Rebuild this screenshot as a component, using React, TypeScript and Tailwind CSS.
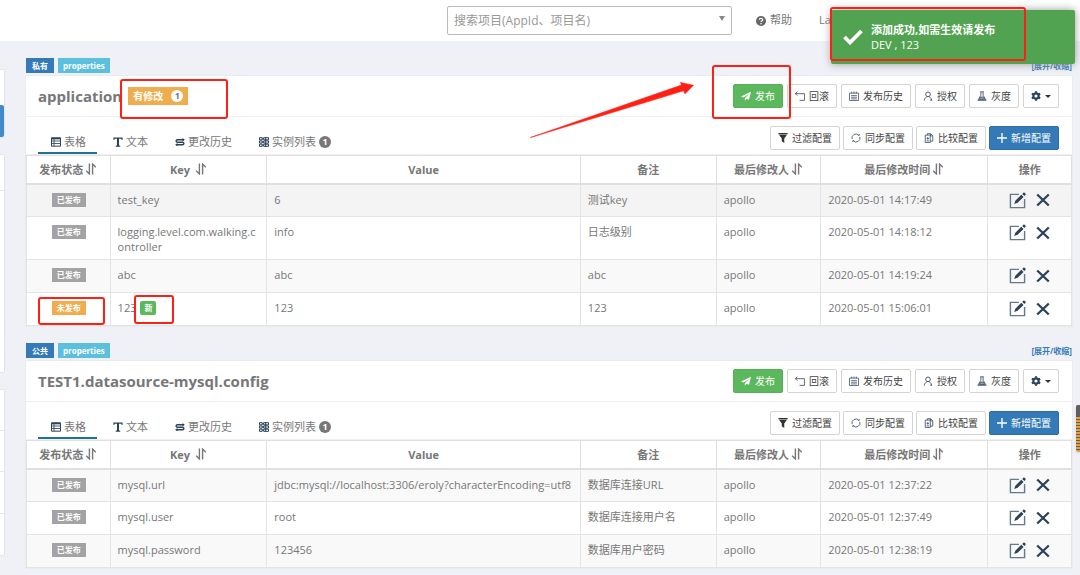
import type { ReactNode, SVGProps } from 'react';

interface ConfigItem {
  released: boolean;
  key: string;
  isNew?: boolean;
  value: string;
  comment: string;
  operator: string;
  time: string;
}

interface NamespaceData {
  name: string;
  scope: string;
  modified?: number;
  hoverFirst?: boolean;
  items: ConfigItem[];
}

const namespaces: NamespaceData[] = [
  {
    name: 'application',
    scope: '私有',
    modified: 1,
    hoverFirst: true,
    items: [
      { released: true, key: 'test_key', value: '6', comment: '测试key', operator: 'apollo', time: '2020-05-01 14:17:49' },
      { released: true, key: 'logging.level.com.walking.controller', value: 'info', comment: '日志级别', operator: 'apollo', time: '2020-05-01 14:18:12' },
      { released: true, key: 'abc', value: 'abc', comment: 'abc', operator: 'apollo', time: '2020-05-01 14:19:24' },
      { released: false, key: '123', isNew: true, value: '123', comment: '123', operator: 'apollo', time: '2020-05-01 15:06:01' },
    ],
  },
  {
    name: 'TEST1.datasource-mysql.config',
    scope: '公共',
    items: [
      { released: true, key: 'mysql.url', value: 'jdbc:mysql://localhost:3306/eroly?characterEncoding=utf8', comment: '数据库连接URL', operator: 'apollo', time: '2020-05-01 12:37:22' },
      { released: true, key: 'mysql.user', value: 'root', comment: '数据库连接用户名', operator: 'apollo', time: '2020-05-01 12:37:49' },
      { released: true, key: 'mysql.password', value: '123456', comment: '数据库用户密码', operator: 'apollo', time: '2020-05-01 12:38:19' },
    ],
  },
];

/* ---------- icons ---------- */

function Svg({ children, className = 'w-2.5 h-2.5', ...rest }: SVGProps<SVGSVGElement>) {
  return (
    <svg viewBox="0 0 12 12" fill="none" stroke="currentColor" className={`shrink-0 ${className}`} aria-hidden="true" {...rest}>
      {children}
    </svg>
  );
}

const PlaneIcon = () => (
  <Svg stroke="none" fill="currentColor">
    <path d="M12 1 0 6.6l3.2 1.2L9.6 3.6 4.6 8.6v3l2-2.2 3 1.2z" />
  </Svg>
);

const RollbackIcon = () => (
  <Svg strokeWidth="1.1">
    <path d="M.5 3.2h11v8H5.5M2.8.8.5 3.2l2.3 2.4" />
  </Svg>
);

const CalendarIcon = () => (
  <Svg strokeWidth="1">
    <path d="M.6 2.5h10.8v8.9H.6zM3.2.6v2.5M6 .6v2.5M8.8.6v2.5M2.5 5.5h7M2.5 7.5h7M2.5 9.5h7" />
  </Svg>
);

const UserIcon = () => (
  <Svg strokeWidth="1.2">
    <circle cx="6" cy="4" r="2.8" />
    <path d="M1.5 11.5c.3-2.500 1.500-3.600 3-4.400M10.500 11.500c-.3-2.500-1.500-3.600-3-4.400M8.500 11h2" />
  </Svg>
);

const FlaskIcon = () => (
  <Svg strokeWidth="1.1">
    <path d="M3.8 1h4.400M4.700 1v4L1 11.200h10L7.300 5V1" />
    <path d="M4.400 7.200 2.600 10.200h6.800L7.600 7.200z" fill="currentColor" fillOpacity="0.6" />
  </Svg>
);

const GearIcon = () => (
  <Svg className="w-2.5 h-2.5 text-[#2b425b]" strokeWidth="2.6">
    <circle cx="6" cy="6" r="3.2" />
    <path d="M6 .2v2M6 9.800v2M1 3.100l1.700 1M9.300 7.900l1.700 1M1 8.900l1.700-1M9.300 4.100l1.700-1" />
  </Svg>
);

const FilterIcon = () => (
  <Svg className="w-2.5 h-2.5 text-[#333]" stroke="none" fill="currentColor">
    <path d="M.5 0h11v1.500H.5zM1.200 2h9.600L7.500 6.500V12l-3-2V6.500z" />
  </Svg>
);

const SyncIcon = () => (
  <Svg strokeWidth="1.1">
    <path d="M1.300 7.300A4.900 4.900 0 0 1 9.500 2.600M10.700 4.700A4.900 4.900 0 0 1 2.500 9.400" />
    <path d="M10 1.200v1.800H8.200M2 10.800V9h1.800" strokeWidth="0.8" />
  </Svg>
);

const CompareIcon = () => (
  <Svg strokeWidth="1.1">
    <path d="M1.500 2.500h6v9h-6zM4 2.500V.8h4l2.500 2.500v6.500h-3M3 6.500h3M4.500 5v3M3 9.500h3M7.800 1v2.500h2.500" />
  </Svg>
);

const PlusIcon = () => (
  <Svg strokeWidth="1.6">
    <path d="M6 0v12M0 6h12" />
  </Svg>
);

const TableIcon = () => (
  <Svg strokeWidth="1.2">
    <path d="M.6 1h10.800v10H.6z" />
    <path d="M.6 1.800h10.800" strokeWidth="2" />
    <path d="M3.600 2v9M.6 4.800h10.800M.6 7.800h10.800" strokeWidth="1" />
  </Svg>
);

const TextIcon = () => (
  <Svg stroke="none" fill="currentColor">
    <path d="M.5.5h11v3.200h-1L10 2H7.200v8l1.600.8v.9H3.200v-.9L4.800 10V2H2l-.5 1.700h-1z" />
  </Svg>
);

const HistoryIcon = () => (
  <Svg strokeWidth="1.7">
    <path d="M10.500 3.300H3C.8 3.300.8 6.200 3 6.200h6c2.200 0 2.200 3 0 3H1.500" />
    <path d="M9 1.300v4l2.800-2zM3 7.200v4L.2 9.200z" fill="currentColor" stroke="none" />
  </Svg>
);

const InstanceIcon = () => (
  <Svg strokeWidth="1.2">
    <path d="M.6.8h3.200v2.600H.6zM.6 4.700h3.200v2.600H.6zM.6 8.600h3.200v2.600H.6zM5.600.8h5.800v2.600H5.600zM5.600 4.700h5.800v2.600H5.600zM5.600 8.600h5.800v2.600H5.600zM3.800 2.100h1.800M3.800 6h1.800M3.800 9.900h1.800M8 .8v10.400" />
  </Svg>
);

// each arrow carries its barb on the outer side only
const SortIcon = () => (
  <Svg className="w-3 h-3" strokeWidth="1.4">
    <path d="M4.400.5v10.400L1.200 7.700M7.600 11.500V1.100l3.200 3.200" />
  </Svg>
);

const EditIcon = () => (
  <svg viewBox="0 0 18 18" className="h-[17px] w-[17px]" fill="none" aria-hidden="true">
    <path d="M10.500 2.500H1.500v14h15V7.500" stroke="#66788c" strokeWidth="1.5" />
    <path d="m5.500 12.800 1.200-3.600L13 3l2.400 2.300-6.300 6.200zM14 2l1.300-1.200c.9-.8 3 1.200 2.200 2.200L16.300 4.300z" fill="#2b425b" />
  </svg>
);

const DeleteIcon = () => (
  <svg viewBox="0 0 14 14" className="h-3.5 w-3.5" fill="none" aria-hidden="true">
    <path d="m1.200 1.500 11.600 11M12.800 1.500l-11.600 11" stroke="#2b425b" strokeWidth="2.3" />
  </svg>
);

/* ---------- small pieces ---------- */

function ToolButton({ icon, children, variant = 'default', label }: {
  icon: ReactNode;
  children?: ReactNode;
  variant?: 'default' | 'success' | 'primary';
  label?: string;
}) {
  const styles = {
    default: 'bg-white border-[#d4d4d4] text-[#444]',
    success: 'bg-[#5cb85c] border-[#56b156] text-white',
    primary: 'bg-[#337ab7] border-[#2e6da4] text-white',
  };
  return (
    <button
      type="button"
      aria-label={label}
      className={`flex h-6 items-center gap-1 rounded-xs border px-[7px] text-[10px] whitespace-nowrap ${styles[variant]}`}
    >
      <span className={variant === 'default' ? 'text-[#4a5d73]' : ''}>{icon}</span>
      {children}
    </button>
  );
}

function Tab({ icon, children, active }: { icon: ReactNode; children: ReactNode; active?: boolean }) {
  return (
    <button
      type="button"
      role="tab"
      aria-selected={!!active}
      className={`flex h-[22px] items-center gap-[3px] border-b-2 pr-[11px] pl-[13px] text-[11px] ${active ? 'border-[#1f7391]' : 'border-transparent'}`}
    >
      <span className="text-[#2b425b]">{icon}</span>
      {children}
    </button>
  );
}

function StatusLabel({ released }: { released: boolean }) {
  return (
    <span className={`mt-px inline-block h-3.5 px-[5px] align-top text-[8px] leading-[14px] font-bold text-white ${released ? 'bg-[#a3a3a3]' : 'bg-[#f0ad4e]'}`}>
      {released ? '已发布' : '未发布'}
    </span>
  );
}

function Th({ children, width, sortable }: { children: ReactNode; width: string; sortable?: boolean }) {
  return (
    <th className={`${width} h-7 border border-b-2 border-[#e0e0e0] p-0 font-bold`}>
      <span className="flex items-center justify-center gap-0.5">
        {children}
        {sortable && <SortIcon />}
      </span>
    </th>
  );
}

const cell = 'border border-[#e4e4e4] pt-[7px] pr-1.5 pb-[5px] pl-[7px] break-all';

function ItemTable({ items, hoverFirst }: { items: ConfigItem[]; hoverFirst?: boolean }) {
  return (
    <table className="w-full table-fixed border-collapse text-left text-[11px] leading-[15px]">
      <thead>
        <tr>
          <Th width="w-[8%]" sortable>发布状态</Th>
          <Th width="w-[15%]" sortable>Key&nbsp;</Th>
          <Th width="w-[30%]">Value</Th>
          <Th width="w-[13%]">备注</Th>
          <Th width="w-[10%]" sortable>最后修改人</Th>
          <Th width="w-[16%]" sortable>最后修改时间</Th>
          <Th width="w-[8%]">操作</Th>
        </tr>
      </thead>
      <tbody>
        {items.map((item, i) => (
          <tr
            key={item.key}
            className={`h-[33px] align-top ${i === 0 && hoverFirst ? 'bg-[#f4f4f4]' : i % 2 === 0 ? 'bg-[#f9f9f9]' : 'bg-white'}`}
          >
            <td className={`${cell} text-center`}><StatusLabel released={item.released} /></td>
            <td className={cell}>
              {item.key}
              {item.isNew && (
                <span className="mt-px ml-1 inline-block h-3.5 rounded-xs bg-[#5cb85c] px-1 align-top text-[8px] leading-[14px] font-bold text-white">新</span>
              )}
            </td>
            <td className={cell}>{item.value}</td>
            <td className={cell}>{item.comment}</td>
            <td className={cell}>{item.operator}</td>
            <td className={cell}>{item.time}</td>
            <td className="border border-[#e4e4e4] p-0 pt-[7px]">
              <div className="flex items-center justify-center gap-2.5">
                <button type="button" aria-label="修改"><EditIcon /></button>
                <button type="button" aria-label="删除"><DeleteIcon /></button>
              </div>
            </td>
          </tr>
        ))}
      </tbody>
    </table>
  );
}

function Namespace({ data }: { data: NamespaceData }) {
  return (
    <section>
      <div className="flex h-[18px] items-start justify-between text-[8px] leading-[15px] font-bold">
        <div className="flex gap-1 text-white">
          <span className="bg-[#337ab7] px-1.5">{data.scope}</span>
          <span className="bg-[#5bc0de] px-[5px]">properties</span>
        </div>
        <a href="#toggle" className="text-[#337ab7]">[展开/收缩]</a>
      </div>

      <div className="bg-white shadow-[0_0_1px_#ccc]">
        <header className="flex h-[41px] items-center justify-between border-b border-[#f0f0f0] pr-[13px] pl-3">
          <h2 className="flex items-center gap-1.5 text-[15px] font-bold text-[#777]">
            {data.name}
            {data.modified && (
              <span className="flex h-[18px] items-center gap-2 bg-[#f0ad4e] px-[5px] text-[10px] text-white">
                有修改
                <span className="h-3 w-3 rounded-full bg-white text-center text-[9px] leading-3 text-[#777]">{data.modified}</span>
              </span>
            )}
          </h2>
          <div className="flex gap-1">
            <ToolButton variant="success" icon={<PlaneIcon />}>发布</ToolButton>
            <ToolButton icon={<RollbackIcon />}>回滚</ToolButton>
            <ToolButton icon={<CalendarIcon />}>发布历史</ToolButton>
            <ToolButton icon={<UserIcon />}>授权</ToolButton>
            <ToolButton icon={<FlaskIcon />}>灰度</ToolButton>
            <ToolButton icon={<GearIcon />} label="更多操作">
              <span className="border-x-[3px] border-t-[3px] border-x-transparent border-t-[#333]" />
            </ToolButton>
          </div>
        </header>

        <div className="flex h-[38px] items-end justify-between border-b border-[#f0f0f0] pr-[13px] pl-3">
          <div role="tablist" className="flex gap-[3px]">
            <Tab active icon={<TableIcon />}>表格</Tab>
            <Tab icon={<TextIcon />}>文本</Tab>
            <Tab icon={<HistoryIcon />}>更改历史</Tab>
            <Tab icon={<InstanceIcon />}>
              实例列表
              <span className="h-3 w-3 rounded-full bg-[#777] text-center text-[9px] leading-3 font-bold text-white">1</span>
            </Tab>
          </div>
          <div className="flex gap-[3px] pb-1">
            <ToolButton icon={<FilterIcon />}>过滤配置</ToolButton>
            <ToolButton icon={<SyncIcon />}>同步配置</ToolButton>
            <ToolButton icon={<CompareIcon />}>比较配置</ToolButton>
            <ToolButton variant="primary" icon={<PlusIcon />}>新增配置</ToolButton>
          </div>
        </div>

        <ItemTable items={data.items} hoverFirst={data.hoverFirst} />
      </div>
    </section>
  );
}

function Marker({ className }: { className: string }) {
  return <div className={`pointer-events-none absolute rounded-[3px] border-2 border-[#ff2015] ${className}`} />;
}

export default function App() {
  return (
    <div className="relative min-h-screen overflow-hidden bg-[#f0f1f7] font-['Open_Sans','Noto_Sans_CJK_SC',sans-serif] text-[11px] text-[#777]">
      <nav className="flex h-[41px] items-center bg-white pl-[447px]">
        <div className="flex h-[29px] w-[285px] items-center rounded-xs border border-[#bbb]">
          <input
            aria-label="搜索项目"
            placeholder="搜索项目(AppId、项目名)"
            className="min-w-0 flex-1 px-1.5 text-xs outline-none placeholder:text-[#999]"
          />
          <span className="mr-1.5 mb-1 border-x-[3px] border-t-[5px] border-x-transparent border-t-[#888]" />
        </div>
        <a href="#help" className="ml-6 flex items-center gap-1">
          <svg viewBox="0 0 12 12" className="h-2.5 w-2.5" aria-hidden="true">
            <circle cx="6" cy="6" r="6" fill="#666" />
            <path d="M4 4.600C4 2.200 8 2.200 8 4.500 8 6 6 5.800 6 7.300M6 8.300v1.500" stroke="#fff" strokeWidth="1.5" fill="none" />
          </svg>
          帮助
        </a>
        <a href="#language" className="ml-[27px]">Language</a>
      </nav>

      <div className="flex items-start pr-2">
        <aside className="w-[5px] shrink-0 pt-7">
          <div className="flex h-[69px] items-end rounded-r-xs border border-l-0 border-[#e2e3e8] bg-white">
            <span className="h-8 w-1 rounded-r-xs bg-[#428bca]" />
          </div>
          <div className="mt-4 h-[219px] rounded-r-xs border border-l-0 border-[#e2e3e8] bg-white">
            <div className="h-9 border-b border-[#e8e8ec]" />
          </div>
          <div className="mt-4 rounded-r-xs border border-l-0 border-[#e2e3e8] bg-white">
            <div className="h-[41px] border-b border-[#e8e8ec]" />
            <div className="h-[41px] border-b border-[#e8e8ec]" />
            <div className="h-[42px] border-b border-[#e8e8ec]" />
            <div className="h-[41px]" />
          </div>
        </aside>
        <main className="flex min-w-0 flex-1 flex-col gap-[17px] pt-[17px] pl-[21px]">
          {namespaces.map((ns) => <Namespace key={ns.name} data={ns} />)}
        </main>
      </div>

      {/* toast */}
      <div role="status" className="absolute top-[10px] right-[5px] flex h-[54px] w-[244px] items-center gap-2 rounded-xs bg-[#51a351] pl-3 text-white shadow-[0_0_8px_#999]">
        <svg viewBox="0 0 20 16" className="h-4 w-5" aria-hidden="true">
          <path d="m1.500 8 5.500 5.500L18.500 2" stroke="#fff" strokeWidth="3.8" fill="none" />
        </svg>
        <div className="leading-[15px]">
          <p className="font-bold">添加成功,如需生效请发布</p>
          <p>DEV , 123</p>
        </div>
      </div>

      {/* side handle */}
      <div className="absolute top-[405px] right-0 h-[47px] w-1 rounded-l-xs bg-[repeating-linear-gradient(#e5a13c_0_2px,#5f5f5f_2px_3px)] shadow">
        <div className="h-[11px] rounded-tl-xs bg-[#5f5f5f]" />
      </div>

      {/* annotations */}
      <Marker className="top-[7px] right-[54px] h-[54px] w-[196px]" />
      <Marker className="top-[79px] left-[120px] h-10 w-[108px]" />
      <Marker className="top-[65px] right-[289px] h-[54px] w-[79px]" />
      <Marker className="top-[297px] left-[38px] h-7 w-[67px]" />
      <Marker className="top-[295px] left-[134px] h-[29px] w-10" />
      <svg viewBox="0 0 164 56" className="pointer-events-none absolute top-[82px] right-[386px] h-14 w-[164px]" aria-hidden="true">
        <path d="M.5 55.500 151.500 3 150.500.5 163.500 3.300 155 11.800 153.500 8.800z" fill="#ff2015" stroke="#ff2015" strokeWidth="0.6" />
      </svg>
    </div>
  );
}
